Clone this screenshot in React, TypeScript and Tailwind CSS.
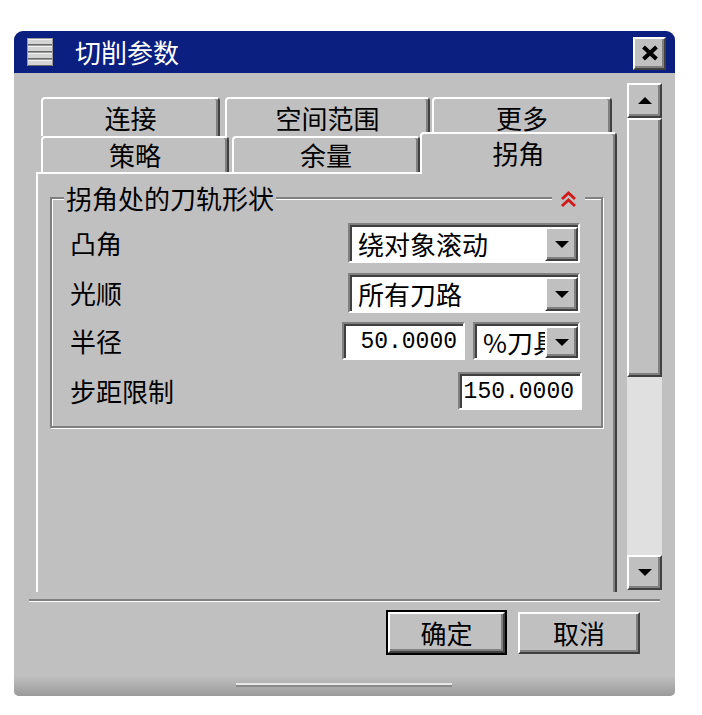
import type { ReactNode } from 'react'

const raised =
  'bg-[#c0c0c0] border-2 border-t-white border-l-white border-r-[#404040] border-b-[#404040] shadow-[inset_-2px_-2px_0_#808080]'

function MenuIcon() {
  return (
    <svg width="26" height="28" viewBox="0 0 26 28">
      <rect x="0" y="0" width="26" height="28" fill="#9a9a9a" />
      {[0, 7, 14, 21].map((y) => (
        <g key={y}>
          <rect x="1" y={y + 1} width="24" height="5" fill="#d4d4d4" />
          <rect x="1" y={y + 1} width="24" height="1" fill="#f2f2f2" />
          <rect x="1" y={y + 6} width="24" height="1" fill="#6a6a6a" />
        </g>
      ))}
    </svg>
  )
}

function CloseIcon() {
  return (
    <svg width="18" height="16" viewBox="0 0 18 16">
      <path d="M2.5 2 L15.5 14 M15.5 2 L2.5 14" stroke="#000" strokeWidth="4" />
    </svg>
  )
}

function Arrow({ up }: { up?: boolean }) {
  return (
    <svg width="14" height="7" viewBox="0 0 14 7">
      {up ? <polygon points="0,7 14,7 7,0" fill="#000" /> : <polygon points="0,0 14,0 7,7" fill="#000" />}
    </svg>
  )
}

function Chevrons() {
  return (
    <svg width="17" height="18" viewBox="0 0 17 18">
      <polyline points="2,9 8.5,3 15,9" fill="none" stroke="#d11a1a" strokeWidth="3" />
      <polyline points="2,16 8.5,10 15,16" fill="none" stroke="#d11a1a" strokeWidth="3" />
    </svg>
  )
}

function Sunken({ className, children }: { className: string; children: ReactNode }) {
  return (
    <div className={`flex border-2 border-t-[#808080] border-l-[#808080] border-r-white border-b-white ${className}`}>
      <div className="flex-1 min-w-0 flex bg-white border-t-2 border-l-2 border-t-[#404040] border-l-[#404040]">
        {children}
      </div>
    </div>
  )
}

function Combo({ text, className, clip }: { text: string; className: string; clip?: boolean }) {
  return (
    <Sunken className={className}>
      <div
        className={`flex-1 min-w-0 whitespace-nowrap pl-[6px] flex items-center text-[26px] leading-[32px] ${
          clip ? 'overflow-hidden' : ''
        }`}
      >
        {text}
      </div>
      <div className={`w-[33px] shrink-0 flex items-center justify-center ${raised}`}>
        <Arrow />
      </div>
    </Sunken>
  )
}

function NumberBox({ value, className }: { value: string; className: string }) {
  return (
    <Sunken className={className}>
      <div className="flex-1 flex items-center justify-end pr-[6px] font-['Liberation_Mono',monospace] text-[23px] leading-[30px]">
        {value}
      </div>
    </Sunken>
  )
}

const backTab =
  'h-[39px] flex items-center justify-center bg-[#c0c0c0] border-t-2 border-l-2 border-t-white border-l-white border-r-2 border-r-[#404040] rounded-t-[4px] shadow-[inset_-2px_0_0_#808080] text-[26px] leading-none'

export default function App() {
  return (
    <div className="w-[702px] h-[715px] bg-white pt-[31px] pl-[14px] text-black font-['Noto_Sans_CJK_SC','Noto_Sans',sans-serif]">
      <div className="w-[661px] h-[665px] flex flex-col bg-[#c0c0c0] rounded-t-[9px] rounded-b-[5px] overflow-hidden">
        {/* title bar */}
        <div className="h-[42px] shrink-0 bg-[#0b1f80] flex items-center pl-[13px] pr-[9px]">
          <MenuIcon />
          <span className="ml-[22px] text-white text-[26px] leading-none">切削参数</span>
          <div className={`ml-auto w-[33px] h-[33px] mt-[2px] flex items-center justify-center ${raised}`}>
            <CloseIcon />
          </div>
        </div>

        {/* scrolling body */}
        <div className="h-[524px] shrink-0 flex">
          <div className="w-[613px] pl-[22px] pr-[10px] pt-[24px] flex flex-col">
            {/* back row of tabs */}
            <div className="flex h-[39px] pl-[5px]">
              <div className={`w-[179px] ${backTab}`}>连接</div>
              <div className={`ml-[5px] w-[205px] ${backTab}`}>空间范围</div>
              <div className={`ml-[2px] w-[180px] ${backTab}`}>更多</div>
            </div>
            {/* front row of tabs */}
            <div className="flex items-end h-[36px] pl-[5px] relative z-10">
              <div className="w-[188px] h-[36px] flex items-center justify-center bg-[#c0c0c0] border-t-2 border-l-2 border-t-white border-l-white border-r-2 border-r-[#404040] rounded-t-[4px] shadow-[inset_-2px_0_0_#808080] text-[26px] leading-none">
                策略
              </div>
              <div className="ml-[3px] w-[188px] h-[36px] flex items-center justify-center bg-[#c0c0c0] border-t-2 border-l-2 border-t-white border-l-white border-r-2 border-r-[#404040] rounded-t-[4px] shadow-[inset_-2px_0_0_#808080] text-[26px] leading-none">
                余量
              </div>
              <div className="w-[197px] h-[42px] -mb-[2px] flex items-start justify-center pt-[6px] bg-[#c0c0c0] border-t-2 border-l-2 border-t-white border-l-white border-r-2 border-r-[#404040] rounded-t-[4px] shadow-[inset_-2px_0_0_#808080] text-[26px] leading-none">
                拐角
              </div>
            </div>

            {/* tab page */}
            <div className="h-[420px] bg-[#c0c0c0] border-t-2 border-l-2 border-t-white border-l-white border-r-2 border-r-[#404040] shadow-[inset_-2px_0_0_#808080] px-[12px] pt-[23px]">
              <div className="relative h-[231px] border-2 border-[#808080] shadow-[inset_1px_1px_0_#fff,1px_1px_0_#fff] pl-[18px] pr-[21px] pt-[24px] flex flex-col">
                <div className="absolute -top-[16px] left-[12px] bg-[#c0c0c0] px-[2px] text-[26px] leading-[30px]">
                  拐角处的刀轨形状
                </div>
                <div className="absolute -top-[9px] right-[16px] bg-[#c0c0c0] px-[8px] flex">
                  <Chevrons />
                </div>

                <div className="flex items-center justify-between h-[40px]">
                  <span className="text-[26px] leading-none">凸角</span>
                  <Combo text="绕对象滚动" className="w-[232px] h-[40px]" />
                </div>
                <div className="mt-[10px] flex items-center justify-between h-[40px]">
                  <span className="text-[26px] leading-none">光顺</span>
                  <Combo text="所有刀路" className="w-[232px] h-[40px]" />
                </div>
                <div className="mt-[9px] flex items-center h-[38px]">
                  <span className="text-[26px] leading-none">半径</span>
                  <NumberBox value="50.0000" className="ml-auto w-[123px] h-[38px]" />
                  <Combo text="%刀具" clip className="ml-[8px] w-[107px] h-[38px]" />
                </div>
                <div className="mt-[12px] flex items-center h-[38px]">
                  <span className="text-[26px] leading-none">步距限制</span>
                  <NumberBox value="150.0000" className="ml-auto -mr-[2px] w-[124px] h-[38px]" />
                </div>
              </div>
            </div>
          </div>

          {/* scrollbar */}
          <div className="w-[35px] h-[507px] mt-[10px] flex flex-col">
            <div className={`h-[35px] shrink-0 flex items-center justify-center ${raised}`}>
              <Arrow up />
            </div>
            <div className={`h-[259px] shrink-0 ${raised}`} />
            <div className="flex-1 bg-[#e0e0e0]" />
            <div className={`h-[35px] shrink-0 flex items-center justify-center ${raised}`}>
              <Arrow />
            </div>
          </div>
        </div>

        {/* separator */}
        <div className="mt-[2px] mx-[15px] h-[3px] shrink-0 border-t-2 border-t-[#808080] border-b border-b-white" />

        {/* buttons */}
        <div className="mt-[8px] flex items-start justify-end gap-[11px] pr-[35px]">
          <div className="w-[121px] h-[45px] border-2 border-black flex">
            <div className={`flex-1 flex items-center justify-center text-[26px] leading-none ${raised}`}>确定</div>
          </div>
          <div className={`mt-[2px] w-[122px] h-[42px] flex items-center justify-center text-[26px] leading-none ${raised}`}>
            取消
          </div>
        </div>

        <div className="flex-1" />

        {/* bottom frame with grip */}
        <div className="h-[20px] shrink-0 bg-linear-to-b from-[#c0c0c0] to-[#9a9a9a] pl-[222px] pt-[7px]">
          <div className="w-[216px] h-[4px] border-t-2 border-t-[#e6e6e6] border-b-2 border-b-[#8a8a8a]" />
        </div>
      </div>
    </div>
  )
}
